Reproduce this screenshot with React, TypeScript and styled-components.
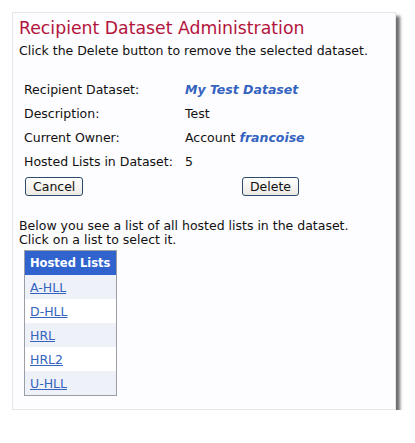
import React from "react";
import styled, { createGlobalStyle } from "styled-components";

const Global = createGlobalStyle`
  html, body { margin: 0; padding: 0; background: #ffffff; }
  body { font-family: "DejaVu Sans", Verdana, sans-serif; font-size: 12.5px; color: #111; }
`;

const Panel = styled.div`
  margin: 12px 0 0 12px;
  width: 384px;
  height: 398px;
  box-sizing: border-box;
  background: #fdfcfe;
  border: 1px solid #e6e6ea;
  box-shadow: 4px 4px 3px #6e6e6e;
  padding: 4px 0 0 6px;
`;

const Title = styled.h1`
  margin: 0;
  font-size: 17.3px;
  font-weight: normal;
  color: #b3143d;
  line-height: 22px;
`;

const Intro = styled.p`
  margin: 4px 0 0 0;
  line-height: 16px;
`;

const InfoGrid = styled.div`
  display: grid;
  grid-template-columns: 161px auto;
  grid-auto-rows: 24px;
  align-items: center;
  margin: 18px 0 0 5px;
`;

const Value = styled.span<{ $em?: boolean }>`
  color: ${(p) => (p.$em ? "#3463c0" : "inherit")};
  font-weight: ${(p) => (p.$em ? "bold" : "normal")};
  font-style: ${(p) => (p.$em ? "italic" : "normal")};
`;

const ButtonRow = styled.div`
  display: flex;
  justify-content: space-between;
  width: 274px;
  margin: 4px 0 0 6px;
`;

const Button = styled.button`
  font-family: "DejaVu Sans", Verdana, sans-serif;
  font-size: 12.5px;
  color: #111;
  height: 19px;
  padding: 0 7px;
  border: 1px solid #2c4a6c;
  border-radius: 3px;
  background: linear-gradient(#ffffff, #ece9e2);
  line-height: 15px;
`;

const Lower = styled.p`
  margin: 23px 0 0 0;
  line-height: 14px;
`;

const Table = styled.table`
  border-collapse: collapse;
  margin: 3px 0 0 5px;
  border: 1px solid #9a9ea6;
  width: 93px;
`;

const Th = styled.th`
  background: #3163cf;
  color: #fff;
  font-weight: bold;
  font-size: 11.5px;
  text-align: left;
  height: 24px;
  padding: 0 5px;
  white-space: nowrap;
`;

const Td = styled.td<{ $alt: boolean }>`
  background: ${(p) => (p.$alt ? "#eef1f8" : "#ffffff")};
  height: 24px;
  padding: 0 5px;
`;

const Link = styled.a`
  color: #3463c0;
  text-decoration: underline;
  cursor: pointer;
`;

const lists = ["A-HLL", "D-HLL", "HRL", "HRL2", "U-HLL"];

export default function App() {
  return (
    <>
      <Global />
      <Panel>
        <Title>Recipient Dataset Administration</Title>
        <Intro>Click the Delete button to remove the selected dataset.</Intro>
        <InfoGrid>
          <span>Recipient Dataset:</span>
          <Value $em>My Test Dataset</Value>
          <span>Description:</span>
          <Value>Test</Value>
          <span>Current Owner:</span>
          <span>
            Account <Value $em>francoise</Value>
          </span>
          <span>Hosted Lists in Dataset:</span>
          <Value>5</Value>
        </InfoGrid>
        <ButtonRow>
          <Button>Cancel</Button>
          <Button>Delete</Button>
        </ButtonRow>
        <Lower>
          Below you see a list of all hosted lists in the dataset.
          <br />
          Click on a list to select it.
        </Lower>
        <Table>
          <thead>
            <tr>
              <Th>Hosted Lists</Th>
            </tr>
          </thead>
          <tbody>
            {lists.map((l, i) => (
              <tr key={l}>
                <Td $alt={i % 2 === 0}>
                  <Link>{l}</Link>
                </Td>
              </tr>
            ))}
          </tbody>
        </Table>
      </Panel>
    </>
  );
}
